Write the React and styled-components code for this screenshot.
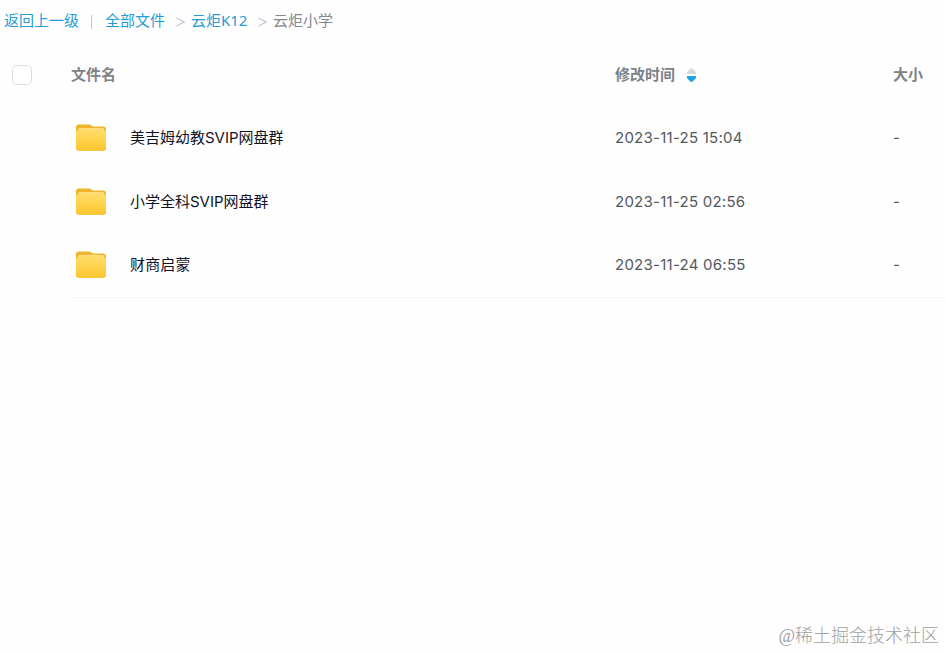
import React from 'react';
import styled, { createGlobalStyle } from 'styled-components';

const GlobalStyle = createGlobalStyle`
  body {
    margin: 0;
    background: #fff;
    font-family: Inter, 'Noto Sans CJK SC', sans-serif;
    font-size: 15px;
  }
`;

const Page = styled.div`
  display: flex;
  flex-direction: column;
  box-sizing: border-box;
  width: 945px;
  height: 652px;
  overflow: hidden;
  background: #fefefe;
`;

const Breadcrumb = styled.nav`
  display: flex;
  align-items: center;
  box-sizing: border-box;
  height: 42px;
  padding: 0 0 2px 4px;
  line-height: 20px;
  font-family: 'Noto Sans', 'Noto Sans CJK SC', sans-serif;
  white-space: nowrap;
`;

const Crumb = styled.a`
  color: ${(p) => (p.$current ? '#85888f' : '#279bd6')};
  width: ${(p) => p.$width}px;
`;

const Divider = styled.span`
  width: 1px;
  height: 14px;
  margin: 4px 13px 0 12px;
  background: #c0c4d4;
`;

const Chevron = styled.svg`
  width: 9px;
  height: 10px;
  margin: 4px 6px 0 11px;
  fill: none;
  stroke: #c1c5d3;
`;

const HeaderRow = styled.div`
  display: grid;
  grid-template-columns: 59px 544px 278px 1fr;
  align-items: center;
  box-sizing: border-box;
  height: 64px;
  padding: 2px 0 0 12px;
  color: #7e8287;
  font-weight: 700;
  line-height: 20px;
`;

const Checkbox = styled.span`
  box-sizing: border-box;
  width: 20px;
  height: 20px;
  border: 1px solid #dedee2;
  border-radius: 5px;
  background: #fff;
`;

const HeaderCell = styled.div`
  display: flex;
  align-items: center;
  gap: 12px;
`;

const SortIcon = styled.svg`
  width: 9px;
  height: 15px;
`;

const FileRow = styled.div`
  display: grid;
  grid-template-columns: 59px 485px 278px 1fr;
  align-items: center;
  box-sizing: border-box;
  height: 64px;
  margin-left: 71px;
  padding-bottom: ${(p) => p.$inset}px;
  border-bottom: 1px solid ${(p) => p.$line};
  line-height: 20px;
`;

const FolderIcon = styled.svg`
  width: 30px;
  height: 27px;
  margin-left: 5px;
`;

const FileName = styled.div`
  color: #111225;
  letter-spacing: ${(p) => p.$spacing}px;
`;

const Meta = styled.div`
  color: #535860;
  letter-spacing: 0.25px;
`;

const Footer = styled.footer`
  margin-top: auto;
  padding: 0 6px 3px 0;
  color: #a0a0a0;
  font-family: 'Liberation Serif', 'Noto Sans CJK SC', sans-serif;
  font-size: 18px;
  font-weight: 300;
  line-height: 26px;
  text-align: right;
`;

const files = [
  { name: '美吉姆幼教SVIP网盘群', time: '2023-11-25 15:04', line: '#fefefe', inset: 0, spacing: 0 },
  { name: '小学全科SVIP网盘群', time: '2023-11-25 02:56', line: '#fafafa', inset: 0, spacing: 0 },
  { name: '财商启蒙', time: '2023-11-24 06:55', line: '#f6f6f6', inset: 2, spacing: 0.15 },
];

function Separator() {
  return (
    <Chevron viewBox="0 0 9 10">
      <path d="M0.5 1 L8 5 L0.5 9" strokeWidth="1.2" />
    </Chevron>
  );
}

function Folder() {
  return (
    <FolderIcon viewBox="0 0 30 27">
      <defs>
        <linearGradient id="folder-front" x1="0" y1="0" x2="0" y2="1">
          <stop offset="0" stopColor="#ffdd6b" />
          <stop offset="1" stopColor="#fdc72f" />
        </linearGradient>
      </defs>
      <path d="M0 3 Q0 0.5 3 0.5 H13 Q14.5 0.5 15.5 1.5 Q16.5 2.5 18 2.5 H27 Q30 2.5 30 5.5 V12 H0Z" fill="#efb52d" />
      <path d="M2 6 Q2 4.2 3.5 4.2 H26.5 Q28 4.2 28 6 V9 H2Z" fill="#ffe9a5" />
      <path d="M0 8.5 Q0 7 1.5 6.5 Q2 5 4 5 H26 Q28 5 28.5 6.5 Q30 7 30 8.5 V23.5 Q30 26.7 27 26.7 H3 Q0 26.7 0 23.5Z" fill="url(#folder-front)" />
      <path d="M0.4 24 Q0.8 26.4 3 26.4 H27 Q29.2 26.4 29.6 24" fill="none" stroke="#f3bc2c" strokeWidth="0.7" />
    </FolderIcon>
  );
}

export default function App() {
  return (
    <>
      <GlobalStyle />
      <Page>
        <Breadcrumb>
          <Crumb $width={75}>返回上一级</Crumb>
          <Divider />
          <Crumb $width={60}>全部文件</Crumb>
          <Separator />
          <Crumb $width={56}>云炬K12</Crumb>
          <Separator />
          <Crumb $width={60} $current>云炬小学</Crumb>
        </Breadcrumb>
        <HeaderRow>
          <Checkbox />
          <HeaderCell>文件名</HeaderCell>
          <HeaderCell>
            修改时间
            <SortIcon viewBox="0 0 9 15">
              <path d="M0 6 V4.8 Q0 3.8 0.8 3.2 L3.3 0.8 Q4.5 -0.1 5.7 0.8 L8.2 3.2 Q9 3.8 9 4.8 V6Z" fill="#d6dade" />
              <path d="M0 8 H9 V9.2 Q9 10.2 8.2 11 L5.7 13.6 Q4.5 14.5 3.3 13.6 L0.8 11 Q0 10.2 0 9.2Z" fill="#22a1e6" />
            </SortIcon>
          </HeaderCell>
          <HeaderCell>大小</HeaderCell>
        </HeaderRow>
        {files.map((file) => (
          <FileRow key={file.name} $line={file.line} $inset={file.inset}>
            <Folder />
            <FileName $spacing={file.spacing}>{file.name}</FileName>
            <Meta>{file.time}</Meta>
            <Meta>-</Meta>
          </FileRow>
        ))}
        <Footer>@稀土掘金技术社区</Footer>
      </Page>
    </>
  );
}
